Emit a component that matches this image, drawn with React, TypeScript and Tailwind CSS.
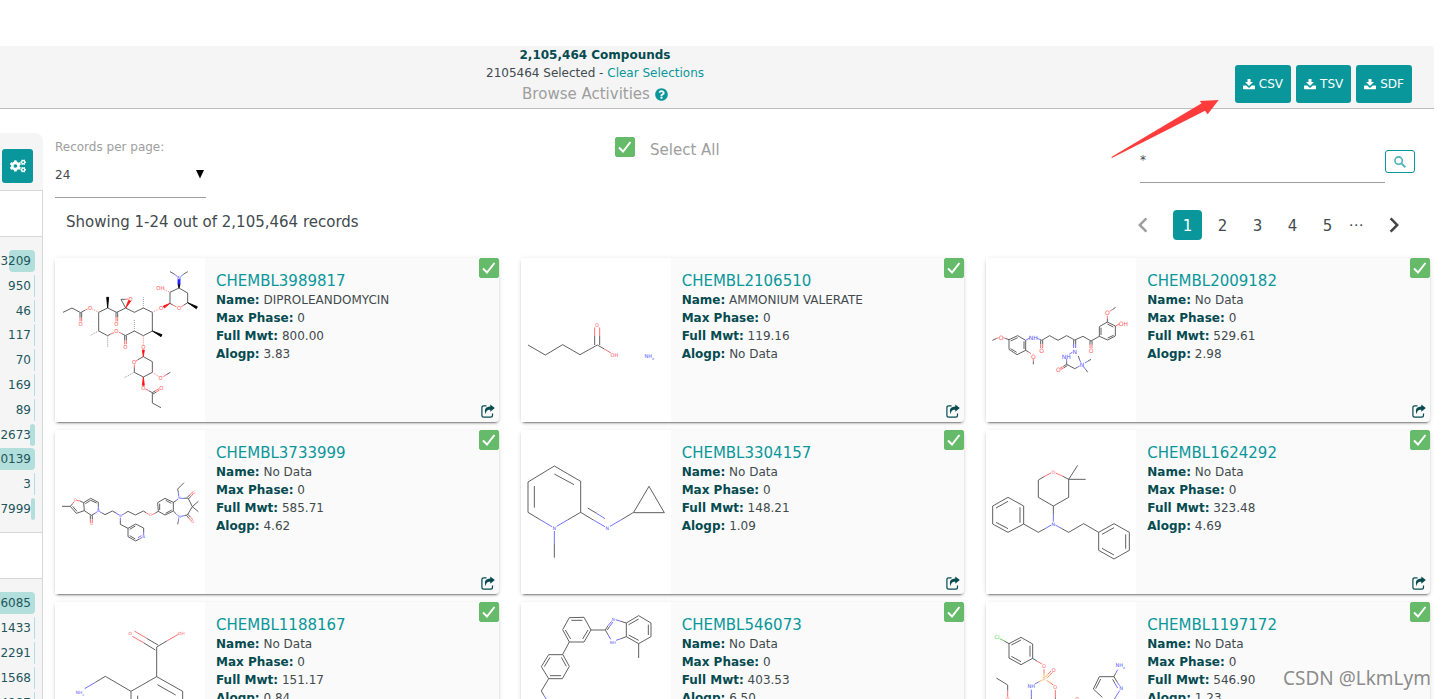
import { useState } from 'react';
import { FaCogs, FaQuestionCircle } from 'react-icons/fa';
import { MdChevronLeft, MdChevronRight } from 'react-icons/md';

type Atom = [number, number, string, string];

interface Molecule {
  box: string;
  size?: number;
  bonds: [string, string][];
  atoms: Atom[];
}

interface Compound {
  id: string;
  name: string;
  phase: string;
  mwt: string;
  alogp: string;
  molecule: Molecule;
}

const BOND_STYLES: Record<string, string> = {
  c: 'fill-none stroke-[#484848]',
  o: 'fill-none stroke-[#ff5a5a]',
  n: 'fill-none stroke-[#5a5aff]',
  cl: 'fill-none stroke-[#3fcf3f]',
  p: 'fill-none stroke-[#ff9a3c]',
  hashC: 'fill-none stroke-[#8a8a8a] [stroke-dasharray:3_3]',
  hashO: 'fill-none stroke-[#ff7070] [stroke-dasharray:3_3]',
  wedgeC: 'fill-black stroke-black',
  wedgeO: 'fill-[#ff1515] stroke-[#ff1515]',
  wedgeN: 'fill-[#2020ff] stroke-[#2020ff]',
};

const ATOM_STYLES: Record<string, string> = {
  o: 'fill-[#ff5a5a]',
  n: 'fill-[#5a5aff]',
  cl: 'fill-[#3fcf3f]',
  p: 'fill-[#ff9a3c]',
};

const diproleandomycin: Molecule = {
  box: '15 24 450 492',
  size: 16,
  bonds: [
    ['c', 'M39 187L66 174L92 188L106 180M90 188V203M95 188V203M146 187V243L173 257L182 252M146 187L173 174L200 187L227 174L253 187L280 174L307 187V243L280 257L253 243L226 257L214 250M198 187V202M203 187V202M224 257V272M229 257V272M227 174L213 148H226M360 160V127L387 114L413 129V158L402 165M370 166L360 160M360 65L374 73M413 65L400 73M280 320L307 335V367L280 381L253 367V352M264 329L280 320M349 374L361 367M296 422L307 428L317 422M309 432L319 426M307 428V459L333 473'],
    ['o', 'M106 180L113 177M90 203V214M95 203V214M182 252L192 248M214 250L207 247M198 202V214M203 202V214M224 272V283M229 272V283M226 148L235 147M402 165L394 170M379 170L370 166M253 352V343M258 333L264 329M340 380L349 374M286 417L296 422M317 422L327 416M319 426L329 420'],
    ['n', 'M374 73L381 79M400 73L393 79'],
    ['hashC', 'M280 174V142M146 243L119 257M173 257V290M253 243V210M253 367L223 383'],
    ['hashO', 'M127 177L146 187M307 187L325 178M343 119L360 127M280 257V284M307 367L325 379'],
    ['wedgeC', 'M173 174L170 142H176ZM307 243L333 260L336 254ZM413 158L439 176L442 170ZM387 114L384 102H390Z'],
    ['wedgeO', 'M227 174L236 151L242 154ZM360 160L340 168L343 174ZM280 320L277 300H283ZM280 381L277 406H283Z'],
    ['wedgeN', 'M384 102V89H390V102Z'],
  ],
  atoms: [
    [120, 174, 'O', 'o'], [92, 223, 'O', 'o'], [199, 223, 'O', 'o'], [199, 243, 'O', 'o'], [226, 292, 'O', 'o'],
    [242, 148, 'O', 'o'], [333, 174, 'O', 'o'], [331, 115, 'OH', 'o'], [387, 174, 'O', 'o'], [387, 83, 'N', 'n'],
    [280, 292, 'O', 'o'], [252, 337, 'O', 'o'], [332, 384, 'O', 'o'], [280, 414, 'O', 'o'], [334, 414, 'O', 'o'],
  ],
};

const ammoniumValerate: Molecule = {
  box: '63 24 450 492',
  size: 15,
  bonds: [
    ['c', 'M84 285L136 315L188 284L240 314L292 285L313 297M284 285V258M299 285V258'],
    ['o', 'M284 258V232M299 258V232M313 297L333 309'],
  ],
  atoms: [[291, 226, 'O', 'o'], [343, 316, 'OH', 'o'], [445, 318, 'NH', 'n'], [459, 324, '₂', 'n']],
};

const hydrazone: Molecule = {
  box: '48 24 450 492',
  size: 18,
  bonds: [
    ['c', 'M67 271L80 265M106 265L117 269L143 257L167 271V301L141 314L117 298V269M122 273L143 263M122 296L140 307M162 274V297M167 301L176 306M190 334V343M209 268L215 271L239 257L264 271L290 257L314 270L339 259L363 273L388 259M212 271V283M218 271V283M311 270V282M317 270V282M360 273V284M366 273V284M388 259V230L412 216L436 228V258L413 270L388 259M393 255V233M412 222L430 231M431 256L413 264M412 216V206M427 179L437 172M290 335V343L314 356L322 352M290 343L280 349M292 347L282 353M353 334L363 328M347 358L353 367M328 327L325 318'],
    ['o', 'M80 265L86 263M100 263L106 265M176 306L183 311M190 326V334M212 283V294M218 283V294M360 284V294M366 284V294M412 206V197M419 184L427 179M436 228L448 222M280 349L270 355M282 353L272 359'],
    ['n', 'M167 271L179 264M202 265L209 268M311 282V294M317 282V294M298 312L307 307M290 326V335M322 352L329 348M345 339L353 334M341 351L347 358M332 337L328 327'],
  ],
  atoms: [
    [93, 261, 'O', 'o'], [190, 261, 'NH', 'n'], [190, 318, 'O', 'o'], [215, 302, 'O', 'o'], [363, 302, 'O', 'o'],
    [412, 188, 'O', 'o'], [460, 219, 'OH', 'o'], [314, 303, 'N', 'n'], [289, 318, 'NH', 'n'], [265, 359, 'O', 'o'],
    [336, 344, 'N', 'n'],
  ],
};

const diazepine: Molecule = {
  box: '15 15 450 492',
  size: 11,
  bonds: [
    ['c', 'M36 244H61L67 237M90 228L101 233L103 257L79 265L61 244M68 244L81 259M101 233L122 220L145 232V243M106 236L122 226L140 234M135 265L124 271L103 257M121 271V283M127 271V283M156 264L165 269L187 258L198 264M223 266L234 259L256 270L280 258L288 263M316 264L325 259L323 233L345 220L370 232V258L345 270L325 259M329 255V236M347 226L364 235M365 255L347 265M370 232L378 227M385 203L383 192L402 173M402 220L414 219L427 245L412 270L403 272M412 217L419 210M416 221L423 214M427 245L445 229M427 245L445 260M410 272L417 280M414 268L421 276M378 266L370 258M385 289L383 298M211 288V298L234 310V335L257 348L268 342M234 310L257 297L281 309V321M239 313L256 303M239 332L256 342'],
    ['o', 'M67 237L73 229M80 226L90 228M121 283V293M127 283V293M288 263L296 268M307 269L316 264M419 210L427 202M423 214L430 206M417 280L424 288M421 276L429 284'],
    ['n', 'M145 243V254M135 265L142 260M149 260L156 264M198 264L207 270M216 270L223 266M378 227L384 222M386 213L385 203M393 220H402M403 272L393 274M378 266L384 272M386 280L385 289M211 278V288M281 321V331M268 342L277 337M264 338L274 332'],
  ],
  atoms: [
    [76, 225, 'O', 'o'], [124, 297, 'O', 'o'], [145, 258, 'N', 'n'], [211, 273, 'N', 'n'], [301, 271, 'O', 'o'],
    [388, 219, 'N', 'n'], [430, 203, 'O', 'o'], [388, 275, 'N', 'n'], [428, 290, 'O', 'o'], [281, 336, 'N', 'n'],
  ],
};

const cyclopropylImine: Molecule = {
  box: '63 15 450 492',
  size: 14,
  bonds: [
    ['c', 'M122 285L84 262V171L163 123L242 169V262L204 284M103 183V248M163 147L222 179M163 355V398M242 262L280 285M263 249L290 265M366 283L401 262L447 184L493 263H401'],
    ['n', 'M122 285L156 305M204 284L170 304M163 318V355M280 285L315 305M290 265L315 281M330 304L366 283'],
  ],
  atoms: [[163, 309, 'N', 'n'], [322, 310, 'N', 'n']],
};

const pyranAmine: Molecule = {
  box: '48 15 450 492',
  size: 14,
  bonds: [
    ['c', 'M222 155L205 165V217L250 243L296 217V163L279 154M296 163L323 121M296 163H347M250 243V267M225 311L205 322L161 297V243L114 217L68 243V297L114 322L161 297M150 293V247M114 229L78 249M78 292L114 311M274 310L296 322L341 296L386 322L432 296L478 322V376L432 402L386 376V322M396 328L432 308M467 328V371M432 390L396 370'],
    ['o', 'M222 155L243 144M257 144L279 154'],
    ['n', 'M250 267V290M225 311L244 300M256 300L274 310'],
  ],
  atoms: [[250, 141, 'O', 'o'], [250, 297, 'N', 'n']],
};

const aminomethylBenzoic: Molecule = {
  box: '15 39 450 492',
  size: 13,
  bonds: [
    ['c', 'M352 155L320 174V263L398 307V395L320 440L243 395V307L166 262L136 280M243 307L320 263M324 168L290 148M316 183L282 162M322 287L377 318M263 320V385M322 416L377 385'],
    ['o', 'M352 155L385 136M290 148L253 126M282 162L247 142'],
    ['n', 'M136 280L104 299'],
  ],
  atoms: [[241, 134, 'O', 'o'], [394, 133, 'OH', 'o'], [87, 311, 'NH', 'n'], [99, 316, '₂', 'n']],
};

const benzimidazole: Molecule = {
  box: '63 534 450 492',
  size: 12,
  bonds: [
    ['c', 'M416 702V659L379 638V597L416 575L453 597V638L416 659M386 602L416 585M445 602V633M416 649L386 633M379 597L363 592M363 644L379 638M324 605L316 618L324 632M322 618L329 607M316 618H273L252 580L208 581L188 617L208 654L252 654L273 618M247 589L214 589M196 618L212 645M248 645L264 618M208 654L188 691L208 727L187 764H146L124 728L146 692H188M184 700L199 727M183 755H150M133 728L150 700M146 764L124 801L131 813'],
    ['n', 'M363 592L347 587M363 644L348 649M324 605L335 592M329 607L339 594M324 632L332 646M131 813L146 836'],
  ],
  atoms: [[340, 587, 'N', 'n'], [338, 655, 'NH', 'n']],
};

const phosphoramidate: Molecule = {
  box: '48 534 450 492',
  size: 15,
  bonds: [
    ['c', 'M103 651L117 659L153 640L188 660V703L153 722L117 702V659M124 663L153 648M180 665V698M153 713L124 697M188 703L202 712M79 762L113 783V800M184 820V850M256 820V850M397 820L370 795L388 758H432L442 775M377 794L392 765M432 758L437 748M428 766L435 779M435 822L428 835'],
    ['cl', 'M89 644L103 651'],
    ['o', 'M202 712L216 720M222 736V748M235 750L243 741M239 754L247 745M240 776L250 783M256 798V820M113 800V818'],
    ['p', 'M222 748V758M226 759L235 750M230 763L239 754M229 769L240 776M215 769L206 774'],
    ['n', 'M206 774L194 780M184 797V820M437 748L443 737M442 775L449 785M435 779L443 792M449 800L435 822'],
  ],
  atoms: [
    [81, 639, 'Cl', 'cl'], [222, 727, 'O', 'o'], [222, 765, 'P', 'p'], [251, 739, 'O', 'o'], [256, 790, 'O', 'o'],
    [184, 787, 'NH', 'n'], [113, 826, 'O', 'o'], [322, 826, 'O', 'o'], [453, 793, 'N', 'n'], [448, 723, 'NH', 'n'],
    [462, 729, '₂', 'n'],
  ],
};

const COMPOUNDS: Compound[] = [
  { id: 'CHEMBL3989817', name: 'DIPROLEANDOMYCIN', phase: '0', mwt: '800.00', alogp: '3.83', molecule: diproleandomycin },
  { id: 'CHEMBL2106510', name: 'AMMONIUM VALERATE', phase: '0', mwt: '119.16', alogp: 'No Data', molecule: ammoniumValerate },
  { id: 'CHEMBL2009182', name: 'No Data', phase: '0', mwt: '529.61', alogp: '2.98', molecule: hydrazone },
  { id: 'CHEMBL3733999', name: 'No Data', phase: '0', mwt: '585.71', alogp: '4.62', molecule: diazepine },
  { id: 'CHEMBL3304157', name: 'No Data', phase: '0', mwt: '148.21', alogp: '1.09', molecule: cyclopropylImine },
  { id: 'CHEMBL1624292', name: 'No Data', phase: '0', mwt: '323.48', alogp: '4.69', molecule: pyranAmine },
  { id: 'CHEMBL1188167', name: 'No Data', phase: '0', mwt: '151.17', alogp: '0.84', molecule: aminomethylBenzoic },
  { id: 'CHEMBL546073', name: 'No Data', phase: '0', mwt: '403.53', alogp: '6.50', molecule: benzimidazole },
  { id: 'CHEMBL1197172', name: 'No Data', phase: '0', mwt: '546.90', alogp: '1.23', molecule: phosphoramidate },
];

// [count, bar width]
const FIRST_FACET: [string, number][] = [
  ['43209', 26], ['950', 1], ['46', 1], ['117', 1], ['70', 1], ['169', 1],
  ['89', 1], ['12673', 5], ['70139', 43], ['3', 1], ['17999', 4],
];

const SECOND_FACET: [string, number][] = [
  ['96085', 43], ['1433', 1], ['2291', 1], ['1568', 1], ['4987', 1],
];

function Structure({ molecule }: { molecule: Molecule }) {
  return (
    <svg viewBox={molecule.box} className="h-[164px] w-[150px] shrink-0 bg-white" aria-hidden="true">
      {molecule.bonds.map(([style, d]) => (
        <path key={style} d={d} strokeWidth={2.6} className={BOND_STYLES[style]} />
      ))}
      {molecule.atoms.map(([x, y, label, style]) => (
        <text
          key={`${x}-${y}`}
          x={x}
          y={y}
          fontSize={molecule.size ?? 14}
          textAnchor="middle"
          dominantBaseline="central"
          className={ATOM_STYLES[style]}
        >
          {label}
        </text>
      ))}
    </svg>
  );
}

function DownloadIcon() {
  return (
    <svg viewBox="0 0 12 11" className="h-[11px] w-3 fill-current" aria-hidden="true">
      <path d="M4.5 0H7.5V3H10L6 7L2 3H4.5Z" />
      <path d="M0.6 6.6H3.2L6 9L8.8 6.6H11.4Q12 6.6 12 7.2V9.6Q12 10.2 11.4 10.2H0.6Q0 10.2 0 9.6V7.2Q0 6.6 0.6 6.6Z" />
    </svg>
  );
}

function ShareIcon() {
  return (
    <svg viewBox="0 0 14 14" className="h-[14px] w-[14px]" aria-hidden="true">
      <path d="M5.5 1.8H2.8Q0.9 1.8 0.9 3.7V11.2Q0.9 13.1 2.8 13.1H9.6Q11.5 13.1 11.5 11.2V9.6" className="fill-none stroke-current" strokeWidth="1.2" />
      <path d="M9.3 0.6L13.8 4.1L9.3 7.8V5.7C6.4 5.6 5 6.6 4.9 10.2C2.6 6.2 4.4 2.6 9.3 2.6Z" fill="currentColor" />
    </svg>
  );
}

function GreenCheckbox({ id, label }: { id: string; label: string }) {
  const [checked, setChecked] = useState(true);

  return (
    <span className="relative block h-5 w-5 shrink-0">
      <input
        id={id}
        type="checkbox"
        aria-label={label}
        checked={checked}
        onChange={(e) => setChecked(e.target.checked)}
        className="block h-5 w-5 appearance-none rounded-[2px] border border-[#66bb6a] checked:bg-[#66bb6a]"
      />
      {checked && (
        <svg viewBox="0 0 20 20" className="pointer-events-none absolute inset-0 h-5 w-5 fill-none stroke-white stroke-2">
          <path d="M4 10.5L8 14.5L15.5 5" />
        </svg>
      )}
    </span>
  );
}

function Field({ label, value }: { label: string; value: string }) {
  return (
    <p>
      <b className="text-[#054b50]">{label}:</b> {value}
    </p>
  );
}

function CompoundCard({ compound }: { compound: Compound }) {
  return (
    <article className="relative flex h-[164px] rounded-sm bg-[#fafafa] shadow-[0_2px_2px_0_rgba(0,0,0,0.14),0_3px_1px_-2px_rgba(0,0,0,0.3),0_1px_5px_0_rgba(0,0,0,0.12)]">
      <Structure molecule={compound.molecule} />
      <div className="min-w-0 flex-1 pt-[14px] pl-[11px] leading-[18px]">
        <a href="#" className="block text-[15px] leading-[19px] text-[#09979b]">{compound.id}</a>
        <Field label="Name" value={compound.name} />
        <Field label="Max Phase" value={compound.phase} />
        <Field label="Full Mwt" value={compound.mwt} />
        <Field label="Alogp" value={compound.alogp} />
      </div>
      <div className="absolute top-0 right-0">
        <GreenCheckbox id={compound.id} label={`Select ${compound.id}`} />
      </div>
      <button type="button" aria-label="Share" className="absolute right-1 bottom-1 text-[#054b50]">
        <ShareIcon />
      </button>
    </article>
  );
}

function FacetRow({ count, bar }: { count: string; bar: number }) {
  return (
    <li className="relative flex h-[22px] shrink-0 items-center justify-end pr-1">
      <span className="absolute inset-y-0 right-0 rounded-sm bg-[#b2dfdb]" style={{ width: bar }} />
      <span className="relative">{count}</span>
    </li>
  );
}

function Sidebar() {
  return (
    <aside className="w-[43px] shrink-0 overflow-hidden rounded-tr-lg bg-[#f5f5f5] text-[#22555c]">
      <div className="h-[57px] pt-4 pl-0.5">
        <button type="button" aria-label="Filter settings" className="flex h-[34px] w-[31px] items-center justify-center rounded-[3px] bg-[#09979b] text-white">
          <FaCogs className="h-4 w-4" />
        </button>
      </div>
      <div className="border-r border-[#d8d8d8]">
        <div className="h-[47px] border-y border-[#d8d8d8] bg-white" />
        <div className="h-[295px] pt-[13px] pr-[7px]">
          <ul className="flex h-[270px] flex-col justify-between">
            {FIRST_FACET.map(([count, bar]) => <FacetRow key={count} count={count} bar={bar} />)}
          </ul>
        </div>
        <div className="h-[47px] border-y border-[#d8d8d8] bg-white" />
        <div className="pt-[13px] pr-[7px] pb-10">
          <ul className="flex flex-col gap-[3px]">
            {SECOND_FACET.map(([count, bar]) => <FacetRow key={count} count={count} bar={bar} />)}
          </ul>
        </div>
      </div>
    </aside>
  );
}

function Header() {
  return (
    <header className="mr-[11px] flex rounded-tr border-b border-[#bdbdbd] bg-[#f5f5f5]">
      <div className="flex-1 pb-0.5 text-center leading-[18px]">
        <h1 className="font-bold text-[#054b50]">2,105,464 Compounds</h1>
        <p>
          2105464 Selected - <a href="#" className="text-[#09979b]">Clear Selections</a>
        </p>
        <p className="flex items-center justify-center gap-[5px] text-[15px] leading-6 text-[#9e9e9e]">
          Browse Activities <FaQuestionCircle className="h-[13px] w-[13px] text-[#09979b]" />
        </p>
      </div>
      <div className="flex w-[244px] items-start justify-end gap-[5px] pt-[19px] pr-[22px]">
        {['CSV', 'TSV', 'SDF'].map((format) => (
          <button key={format} type="button" className="flex h-[38px] items-center gap-1 rounded-[3px] bg-[#09979b] px-2 text-white">
            <DownloadIcon />
            {format}
          </button>
        ))}
      </div>
    </header>
  );
}

function Toolbar() {
  return (
    <div className="grid grid-cols-[560px_1fr_275px] pr-[15px]">
      <div className="relative w-[151px] pt-px">
        <label htmlFor="per-page" className="block leading-[18px] text-[#9e9e9e]">Records per page:</label>
        <select id="per-page" defaultValue="24" className="block h-[42px] w-full appearance-none border-b border-[#9e9e9e] bg-transparent pb-1">
          <option>6</option>
          <option>12</option>
          <option>24</option>
        </select>
        <svg viewBox="0 0 8 9" className="pointer-events-none absolute right-0.5 bottom-[19px] h-[9px] w-2 fill-black">
          <path d="M0 0H8L4 8.5Z" />
        </svg>
      </div>
      <div className="flex gap-[15px]">
        <GreenCheckbox id="select-all" label="Select All" />
        <label htmlFor="select-all" className="text-[15px] leading-[26px] text-[#9e9e9e]">Select All</label>
      </div>
      <div className="flex">
        <input aria-label="Search" defaultValue="*" className="h-[46px] min-w-0 flex-1 border-b border-[#9e9e9e] bg-transparent" />
        <button type="button" aria-label="Run search" className="mt-[13px] flex h-[23px] w-[30px] shrink-0 items-center justify-center rounded-[3px] border border-[#09979b]">
          <svg viewBox="0 0 12 12" className="h-3 w-3 fill-none stroke-[#4cb2b5]">
            <circle cx="4.6" cy="4.6" r="3.7" strokeWidth="1.6" />
            <path d="M7.4 7.4L11.4 11.2" strokeWidth="1.9" />
          </svg>
        </button>
      </div>
    </div>
  );
}

function Pager() {
  return (
    <nav className="flex items-center pr-[22px] text-[15px]" aria-label="Pages">
      <button type="button" aria-label="Previous" className="mr-4 flex w-[29px] justify-center text-[#9e9e9e]">
        <MdChevronLeft className="h-[30px] w-[30px] shrink-0" />
      </button>
      <div className="flex gap-[6px]">
        <button type="button" className="h-[30px] w-[29px] rounded-sm bg-[#09979b] pt-0.5 text-white">1</button>
        {['2', '3', '4', '5'].map((page) => (
          <button key={page} type="button" className="h-[30px] w-[29px] pt-0.5">{page}</button>
        ))}
        <span className="flex w-4 items-center justify-center">⋯</span>
      </div>
      <button type="button" aria-label="Next" className="ml-[15px] flex w-[29px] justify-center text-[#444]">
        <MdChevronRight className="h-[30px] w-[30px] shrink-0" />
      </button>
    </nav>
  );
}

export default function App() {
  return (
    <div className="relative h-screen overflow-hidden bg-white pt-[46px] font-['DejaVu_Sans',Verdana,sans-serif] text-[12px] text-[#424a4e]">
      <Header />
      <div className="flex gap-3 pt-6">
        <Sidebar />
        <main className="min-w-0 flex-1 pt-1 pr-[15px]">
          <Toolbar />
          <div className="mt-3 flex items-start justify-between">
            <p className="pl-[11px] text-[15px] leading-6">Showing 1-24 out of 2,105,464 records</p>
            <Pager />
          </div>
          <section className="mt-[18px] grid grid-cols-3 gap-x-[22px] gap-y-2">
            {COMPOUNDS.map((compound) => <CompoundCard key={compound.id} compound={compound} />)}
          </section>
        </main>
      </div>

      <svg viewBox="64 180 324 174" className="pointer-events-none absolute top-[100px] right-[226px] h-[58px] w-[108px] fill-[#ff3b3b]" aria-hidden="true">
        <path d="M64 352L336 190L330 183L387 180L354 223L346 212L68 353Z" />
      </svg>
      <div className="pointer-events-none absolute right-[14px] bottom-[7px] font-['Noto_Sans',sans-serif] text-[19px] leading-7 text-[#8c8c8c] [text-shadow:1px_1px_0_white]">
        CSDN @LkmLym
      </div>
    </div>
  );
}
